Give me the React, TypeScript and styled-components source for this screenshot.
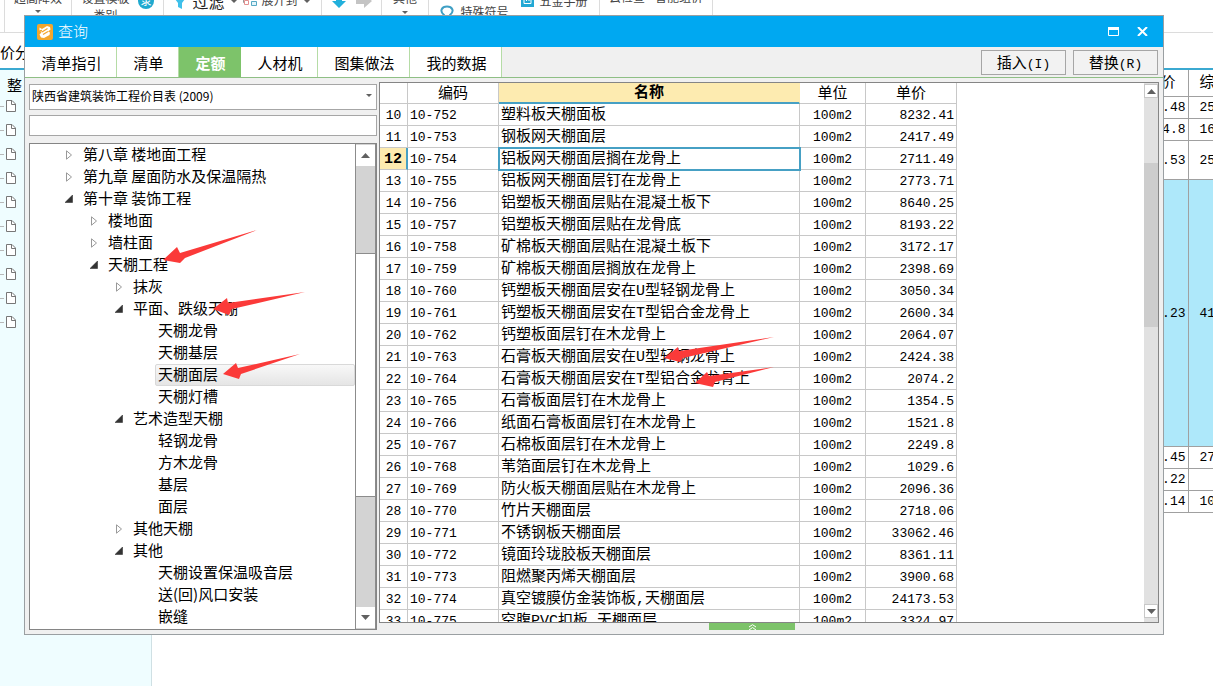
import React from "react";
import styled, { createGlobalStyle, css } from "styled-components";

const sans = `"Noto Sans CJK SC", "Liberation Sans", sans-serif`;
const mono = `"Liberation Mono", "Noto Sans CJK SC", monospace`;
const line = "#c8c8c8";
const accent = "#46a0c4";

const GlobalStyle = createGlobalStyle`
  * { box-sizing: border-box; }
  body { margin: 0; background: #fff; color: #000; font-family: ${sans}; }
  button, input, select { font-family: inherit; color: inherit; }
`;

/* ---------- host application behind the dialog ---------- */

const Page = styled.div`
  position: relative;
  display: flex;
  flex-direction: column;
  height: 100vh;
  min-height: 600px;
  overflow: hidden;
`;

const Ribbon = styled.div`
  display: flex;
  flex: none;
  height: 33px;
  border-bottom: 1px solid #dcdcdc;
  overflow: hidden;
  color: #444;
  font-size: 12px;
  line-height: 12px;
`;

const RibbonGroup = styled.div<{ $w: number; $gap?: number }>`
  flex: none;
  width: ${(p) => p.$w}px;
  border-right: 1px solid #dcdcdc;
  display: flex;
  justify-content: center;
  gap: ${(p) => p.$gap ?? 8}px;
`;

const RibbonStack = styled.div`
  display: flex;
  flex-direction: column;
  align-items: center;
  gap: 2px;
`;

const RibbonRow = styled.div<{ $h?: number; $gap?: number }>`
  flex: none;
  display: flex;
  align-items: flex-end;
  height: ${(p) => p.$h ?? 4}px;
  gap: ${(p) => p.$gap ?? 8}px;
  white-space: nowrap;
  svg { flex: none; }
`;

const FilterLabel = styled.span`
  font-size: 16px;
  line-height: 16px;
  color: #222;
`;

const DocTab = styled.div`
  flex: none;
  height: 37px;
  border-bottom: 2px solid #3ba9d1;
  font-size: 15px;
  line-height: 38px;
  white-space: nowrap;
  overflow: hidden;
`;

const Workspace = styled.div`
  flex: 1;
  display: flex;
  min-height: 0;
`;

const NavPane = styled.div`
  flex: none;
  width: 152px;
  background: #effdff;
  border-right: 1px solid #cfe0e4;
`;

const NavHead = styled.div`
  height: 24px;
  padding-left: 7px;
  font-size: 15px;
  line-height: 30px;
`;

const NavItem = styled.div`
  height: 24px;
  display: flex;
  align-items: center;
`;

const HostArea = styled.div`
  flex: 1;
  overflow: hidden;
`;

const HostTable = styled.table`
  width: 100%;
  table-layout: fixed;
  border-collapse: collapse;
  font-family: ${mono};
  font-size: 13px;
  line-height: 18px;
  th, td {
    padding: 2px 2px 0 0;
    border-bottom: 1px solid #a0a0a0;
    overflow: hidden;
    text-align: right;
    font-weight: 400;
    white-space: nowrap;
  }
  th { font-size: 15px; padding-right: 12px; }
  td + td, th + th { border-left: 1px solid #a0a0a0; text-align: left; padding: 2px 0 0 11px; }
`;

const HostRow = styled.tr<{ $h: number; $on?: boolean }>`
  height: ${(p) => p.$h}px;
  background: ${(p) => (p.$on ? "#aee8fa" : "#fff")};
`;

/* ---------- dialog ---------- */

const Dialog = styled.section`
  position: absolute;
  top: 15px;
  right: 49px;
  bottom: 51px;
  left: 24px;
  display: flex;
  flex-direction: column;
  background: #f0f0f0;
  border: 1px solid #9a9fa2;
`;

const TitleBar = styled.header`
  flex: none;
  height: 31px;
  padding: 0 13px 0 12px;
  display: flex;
  align-items: center;
  gap: 5px;
  background: #00a8f1;
  color: #fff;
  h1 { flex: 1; margin: 0; padding-bottom: 2px; font-size: 15px; font-weight: 300; line-height: 28px; }
`;

const WindowButton = styled.button`
  width: 15px;
  height: 15px;
  margin-left: 9px;
  padding: 0;
  border: 0;
  background: none;
  display: grid;
  place-items: center;
`;

const TabBar = styled.nav`
  flex: none;
  height: 31px;
  padding-right: 5px;
  border-bottom: 1px solid #8fbf85;
  display: flex;
  align-items: center;
`;

const Tab = styled.button<{ $w: number; $on?: boolean }>`
  width: ${(p) => p.$w}px;
  height: 30px;
  padding: 2px 0 0 2px;
  border: 0;
  border-right: 1px solid #b5dca6;
  background: #fff;
  font-size: 15px;
  line-height: 28px;
  ${(p) =>
    p.$on &&
    css`
      background: #7dc36a;
      border-color: #7dc36a;
      color: #fff;
      font-weight: 700;
    `}
`;

const Actions = styled.div`
  margin-left: auto;
  display: flex;
  gap: 7px;
`;

const ActionButton = styled.button`
  width: 85px;
  height: 25px;
  padding: 0;
  border: 1px solid #a6a6a6;
  background: #f2f2f2;
  font-size: 15px;
  line-height: 21px;
  span { font-family: "Liberation Mono", monospace; font-size: 13px; }
`;

const Body = styled.div`
  flex: 1;
  min-height: 0;
  display: flex;
  gap: 2px;
  padding: 4px 4px 0;
`;

const Side = styled.div`
  flex: none;
  width: 348px;
  display: flex;
  flex-direction: column;
  padding-bottom: 4px;
`;

const ComboWrap = styled.div`
  position: relative;
  flex: none;
  height: 26px;
  svg { position: absolute; right: 5px; top: 12px; pointer-events: none; }
`;

const Combo = styled.select`
  width: 100%;
  height: 26px;
  padding: 0 16px 2px 2px;
  border: 1px solid #a6a6a6;
  border-radius: 0;
  background: #fff;
  appearance: none;
  font-size: 12px;
`;

const Search = styled.input`
  flex: none;
  height: 21px;
  margin: 7px 0;
  padding: 0 4px;
  border: 1px solid #a6a6a6;
  background: #fff;
`;

const TreeBox = styled.div`
  flex: 1;
  min-height: 0;
  display: flex;
  border: 1px solid #858585;
  background: #fff;
  overflow: hidden;
`;

const Tree = styled.ul`
  flex: 1;
  margin: 0;
  padding: 0;
  list-style: none;
  font-size: 15px;
`;

const TreeItem = styled.li<{ $level: number }>`
  height: 22px;
  padding-left: ${(p) => 33 + p.$level * 25}px;
  display: flex;
  align-items: center;
  gap: 5px;
`;

const Toggle = styled.button`
  flex: none;
  width: 12px;
  height: 12px;
  padding: 0;
  border: 0;
  background: none;
  display: grid;
  place-items: center;
`;

const TogglePlaceholder = styled.span`
  flex: none;
  width: 12px;
`;

const NodeLabel = styled.span<{ $on?: boolean }>`
  flex: 1;
  height: 22px;
  padding-left: 2px;
  border: 1px solid transparent;
  line-height: 18px;
  white-space: nowrap;
  ${(p) =>
    p.$on &&
    css`
      border-color: #d9d9d9;
      border-radius: 2px;
      background: linear-gradient(#f8f8f8, #e5e5e5);
    `}
`;

const TreeScroll = styled.div`
  flex: none;
  width: 21px;
  padding: 1px 0;
  display: flex;
  flex-direction: column;
  background: #d3d3d3;
  border: solid #8c8c8c;
  border-width: 0 1px;
`;

const TreeScrollButton = styled.button`
  flex: none;
  height: 21px;
  padding: 0;
  border: 0;
  background: #fff;
  display: grid;
  place-items: center;
`;

const TreeThumb = styled.div`
  height: 244px;
  margin: 87px 0 auto;
  border: solid #8c8c8c;
  border-width: 1px 0;
  background: #fff;
`;

const Main = styled.div`
  flex: 1;
  min-width: 0;
  display: flex;
  flex-direction: column;
`;

const GridBox = styled.div`
  flex: 1;
  min-height: 0;
  display: flex;
  justify-content: space-between;
  border: 1px solid #858585;
  background: #fff;
  overflow: hidden;
`;

const Grid = styled.table`
  width: 577px;
  height: 0;
  table-layout: fixed;
  border-collapse: separate;
  border-spacing: 0;
  font-family: ${mono};
  font-size: 13px;
`;

const HeadCell = styled.th<{ $on?: boolean }>`
  height: 21px;
  padding: 3px 0 0;
  border: solid ${line};
  border-width: 0 1px 1px 0;
  font-size: 15px;
  font-weight: 400;
  line-height: 17px;
  ${(p) =>
    p.$on &&
    css`
      background: #fdebb0;
      border-right-color: #fdebb0;
      border-bottom: 2px solid ${accent};
      font-weight: 700;
      line-height: 16px;
    `}
`;

const RowHead = styled.th<{ $on?: boolean }>`
  height: 22px;
  padding: 3px 0 0;
  border: solid ${line};
  border-width: 0 1px 1px 0;
  font-weight: 400;
  line-height: 18px;
  ${(p) =>
    p.$on &&
    css`
      background: #fdebb0;
      border-right: 2px solid ${accent};
      font-size: 15px;
      font-weight: 700;
    `}
`;

const Cell = styled.td<{ $align?: string; $name?: boolean; $on?: boolean }>`
  height: 22px;
  padding: 3px 2px 0;
  border: solid ${line};
  border-width: 0 1px 1px 0;
  text-align: ${(p) => p.$align ?? "left"};
  line-height: 18px;
  white-space: nowrap;
  font-size: ${(p) => (p.$name ? 15 : 13)}px;
  ${(p) =>
    p.$on &&
    css`
      outline: 2px solid ${accent};
      outline-offset: -1px;
    `}
`;

const GridScroll = styled.div`
  flex: none;
  width: 14px;
  padding: 1px 0 4px;
  display: flex;
  flex-direction: column;
  background: #e1e1e1;
`;

const GridScrollButton = styled.button`
  flex: none;
  height: 14px;
  padding: 0;
  border: 1px solid #c8c8c8;
  background: #fff;
  display: grid;
  place-items: center;
`;

const GridThumb = styled.div`
  height: 164px;
  margin: 65px 0 auto;
  background: #cdcdcd;
`;

const Footer = styled.div`
  flex: none;
  height: 11px;
  padding-right: 32px;
  display: flex;
  justify-content: center;
  align-items: flex-start;
`;

const Handle = styled.button`
  width: 86px;
  height: 7px;
  margin-right: 2px;
  padding: 0;
  border: 0;
  background: #7dc36a;
  display: grid;
  place-items: center;
`;

const Annotations = styled.svg`
  position: absolute;
  top: 0;
  left: 0;
  width: 100%;
  height: 100%;
  pointer-events: none;
`;

/* ---------- small drawings ---------- */

const Caret = ({ up, w = 10, h = 5, fill = "#606060" }: { up?: boolean; w?: number; h?: number; fill?: string }) => (
  <svg width={w} height={h} viewBox="0 0 10 5" preserveAspectRatio="none" display="block">
    <path d={up ? "M0 5L5 0L10 5Z" : "M0 0H10L5 5Z"} fill={fill} />
  </svg>
);

const PageIcon = () => (
  <svg width="17" height="14" viewBox="0 0 17 14">
    <path d="M0 7.500H4" stroke="#b9b9b9" />
    <path d="M6.500 1.500H12L15.500 5V12.500H6.500Z" fill="#fff" stroke="#777" />
    <path d="M11.500 1.500V5.500H15.500" fill="none" stroke="#777" />
  </svg>
);

const AppIcon = () => (
  <svg width="16" height="16" viewBox="0 0 16 16">
    <rect width="16" height="16" rx="2" fill="#f3a62d" />
    <path
      d="M2.500 3.500L5 5L10 2L13 3L13.500 5.500L11 7.500L13 8.500L12.500 11L7 14L4 13.500L2.500 10.500L4.500 8.500L2.500 6.500Z"
      fill="#fff"
    />
    <path d="M5 8L10.500 4.500M6 10.500L11 7.500M2.500 7L5 6.500" stroke="#f3a62d" strokeWidth="1.300" />
  </svg>
);

/* ---------- data ---------- */

type Node = [level: number, label: string, state?: "open" | "closed"];

const nodes: Node[] = [
  [0, "第八章 楼地面工程", "closed"],
  [0, "第九章 屋面防水及保温隔热", "closed"],
  [0, "第十章 装饰工程", "open"],
  [1, "楼地面", "closed"],
  [1, "墙柱面", "closed"],
  [1, "天棚工程", "open"],
  [2, "抹灰", "closed"],
  [2, "平面、跌级天棚", "open"],
  [3, "天棚龙骨"],
  [3, "天棚基层"],
  [3, "天棚面层"],
  [3, "天棚灯槽"],
  [2, "艺术造型天棚", "open"],
  [3, "轻钢龙骨"],
  [3, "方木龙骨"],
  [3, "基层"],
  [3, "面层"],
  [2, "其他天棚", "closed"],
  [2, "其他", "open"],
  [3, "天棚设置保温吸音层"],
  [3, "送(回)风口安装"],
  [3, "嵌缝"],
];

const items: [string, string][] = [
  ["塑料板天棚面板", "8232.41"],
  ["钢板网天棚面层", "2417.49"],
  ["铝板网天棚面层搁在龙骨上", "2711.49"],
  ["铝板网天棚面层钉在龙骨上", "2773.71"],
  ["铝塑板天棚面层贴在混凝土板下", "8640.25"],
  ["铝塑板天棚面层贴在龙骨底", "8193.22"],
  ["矿棉板天棚面层贴在混凝土板下", "3172.17"],
  ["矿棉板天棚面层搁放在龙骨上", "2398.69"],
  ["钙塑板天棚面层安在U型轻钢龙骨上", "3050.34"],
  ["钙塑板天棚面层安在T型铝合金龙骨上", "2600.34"],
  ["钙塑板面层钉在木龙骨上", "2064.07"],
  ["石膏板天棚面层安在U型轻钢龙骨上", "2424.38"],
  ["石膏板天棚面层安在T型铝合金龙骨上", "2074.2"],
  ["石膏板面层钉在木龙骨上", "1354.5"],
  ["纸面石膏板面层钉在木龙骨上", "1521.8"],
  ["石棉板面层钉在木龙骨上", "2249.8"],
  ["苇箔面层钉在木龙骨上", "1029.6"],
  ["防火板天棚面层贴在木龙骨上", "2096.36"],
  ["竹片天棚面层", "2718.06"],
  ["不锈钢板天棚面层", "33062.46"],
  ["镜面玲珑胶板天棚面层", "8361.11"],
  ["阻燃聚丙烯天棚面层", "3900.68"],
  ["真空镀膜仿金装饰板,天棚面层", "24173.53"],
  ["空腹PVC扣板,天棚面层", "3324.97"],
];

const hostRows: [number, string, string, boolean?][] = [
  [22, ".48", "25"],
  [22, "4.8", "16"],
  [39, ".53", "25"],
  [267, ".23", "41", true],
  [22, ".45", "27"],
  [22, ".22", ""],
  [22, ".14", "10"],
];

const tabs: [string, number][] = [
  ["清单指引", 92],
  ["清单", 62],
  ["定额", 62],
  ["人材机", 77],
  ["图集做法", 92],
  ["我的数据", 92],
];

const arrows = [
  "163,260 177,247 180,253 257,230 185,258 180,263",
  "213,309 227,298 228,303 305,292 232,309 229,315",
  "223,374 236,363 238,368 300,354 241,374 239,379",
  "664,358 678,347 679,351 774,337 683,358 680,362",
  "695,383 707,372 709,376 774,367 715,382 713,387",
];

export default function App() {
  return (
    <Page>
      <GlobalStyle />
      <Ribbon>
        <RibbonGroup $w={5} />
        <RibbonGroup $w={67}>
          <RibbonStack>
            <RibbonRow>超高降效</RibbonRow>
            <RibbonRow $h={7}><Caret w={6} h={3} /></RibbonRow>
          </RibbonStack>
        </RibbonGroup>
        <RibbonGroup $w={92}>
          <RibbonStack>
            <RibbonRow>设置模板</RibbonRow>
            <RibbonRow $h={15}>类别</RibbonRow>
          </RibbonStack>
          <RibbonRow $h={9}>
            <svg width="16" height="16" viewBox="0 0 16 16">
              <circle cx="8" cy="8" r="8" fill="#1fa9cf" />
              <text x="8" y="12" fontSize="11" textAnchor="middle" fill="#fff">录</text>
            </svg>
          </RibbonRow>
        </RibbonGroup>
        <RibbonGroup $w={158} $gap={6}>
          <RibbonRow $h={9} $gap={7}>
            <svg width="10" height="16" viewBox="0 0 10 16">
              <path d="M0 6H10L7 10V16L3 14V10Z" fill="#3fc0ea" />
            </svg>
            <FilterLabel>过滤</FilterLabel>
          </RibbonRow>
          <RibbonRow $h={3}><Caret w={6} h={3} /></RibbonRow>
          <RibbonRow $h={6} $gap={4}>
            <svg width="15" height="13" viewBox="0 0 15 13">
              <path d="M.5 .5V9.500H6M3 5.500H7" fill="none" stroke="#999" />
              <path d="M1.500 7.500H5.500V11.500H1.500Z" fill="#fff" stroke="#e29090" />
              <path d="M8.500 2.500H13.500V6.500H8.500ZM8.500 8.500H13.500V12.500H8.500Z" fill="#e2f5fb" stroke="#55a8c4" />
            </svg>
            <span>展开到</span>
          </RibbonRow>
          <RibbonRow $h={3}><Caret w={6} h={3} /></RibbonRow>
        </RibbonGroup>
        <RibbonGroup $w={60}>
          <RibbonRow $h={8} $gap={10}>
            <svg width="14" height="14" viewBox="0 0 14 14">
              <path d="M4 0H10V7H14L7 14L0 7H4Z" fill="#22b0dc" />
            </svg>
            <svg width="16" height="14" viewBox="0 0 16 14">
              <path d="M0 4H8V0L16 7L8 14V10H0Z" fill="#c4c4c4" />
            </svg>
          </RibbonRow>
        </RibbonGroup>
        <RibbonGroup $w={47}>
          <RibbonStack>
            <RibbonRow>其他</RibbonRow>
            <RibbonRow $h={8}><Caret w={6} h={3} /></RibbonRow>
          </RibbonStack>
        </RibbonGroup>
        <RibbonGroup $w={171} $gap={12}>
          <RibbonRow $h={18} $gap={6}>
            <svg width="14" height="13" viewBox="0 0 14 13">
              <path d="M1 12H4V10C-1 6 2 1.500 7 1.500S15 6 10 10V12H13" fill="none" stroke="#3f9fc4" strokeWidth="2" />
            </svg>
            特殊符号
          </RibbonRow>
          <RibbonRow $h={7} $gap={6}>
            <svg width="13" height="15" viewBox="0 0 13 15">
              <rect width="13" height="15" fill="#22a8d4" />
              <path d="M3 2.500H10V11.500H3ZM5.500 3V9M8 3V9" fill="none" stroke="#fff" />
            </svg>
            五金手册
          </RibbonRow>
        </RibbonGroup>
        <RibbonGroup $w={113}>
          <RibbonRow $h={3} $gap={10}>
            <span>云检查</span>
            <span>智能组价</span>
          </RibbonRow>
        </RibbonGroup>
      </Ribbon>
      <DocTab>价分</DocTab>
      <Workspace>
        <NavPane>
          <NavHead>整</NavHead>
          {Array.from({ length: 10 }, (_, i) => (
            <NavItem key={i}><PageIcon /></NavItem>
          ))}
        </NavPane>
        <HostArea>
          <HostTable>
            <colgroup><col /><col width="25" /></colgroup>
            <thead>
              <HostRow $h={26}><th>价</th><th>综</th></HostRow>
            </thead>
            <tbody>
              {hostRows.map(([h, a, b, on], i) => (
                <HostRow key={i} $h={h} $on={on}><td>{a}</td><td>{b}</td></HostRow>
              ))}
            </tbody>
          </HostTable>
        </HostArea>
      </Workspace>

      <Dialog aria-label="查询">
        <TitleBar>
          <AppIcon />
          <h1>查询</h1>
          <WindowButton aria-label="最大化">
            <svg width="11" height="9" viewBox="0 0 11 9">
              <path d="M.5 .5H10.500V8.500H.5Z" fill="none" stroke="#fff" />
              <path d="M0 0H11V3H0Z" fill="#fff" />
            </svg>
          </WindowButton>
          <WindowButton aria-label="关闭">
            <svg width="11" height="9" viewBox="0 0 11 9">
              <path d="M1 0L10 9M10 0L1 9" stroke="#fff" strokeWidth="2" />
            </svg>
          </WindowButton>
        </TitleBar>
        <TabBar>
          {tabs.map(([label, w]) => (
            <Tab key={label} $w={w} $on={label === "定额"}>{label}</Tab>
          ))}
          <Actions>
            <ActionButton>插入<span>(I)</span></ActionButton>
            <ActionButton>替换<span>(R)</span></ActionButton>
          </Actions>
        </TabBar>
        <Body>
          <Side>
            <ComboWrap>
              <Combo aria-label="定额库"><option>陕西省建筑装饰工程价目表 (2009)</option></Combo>
              <Caret w={6} h={3} />
            </ComboWrap>
            <Search aria-label="搜索" />
            <TreeBox>
              <Tree>
                {nodes.map(([level, label, state], i) => (
                  <TreeItem key={i} $level={level}>
                    {state ? (
                      <Toggle aria-label={label}>
                        <svg width="8" height="10" viewBox="0 0 8 10">
                          {state === "open" ? (
                            <path d="M7.500 1V8.500H0Z" fill="#333" stroke="#222" strokeWidth=".5" />
                          ) : (
                            <path d="M1.500 .8L6.500 5L1.500 9.200Z" fill="#fff" stroke="#999" />
                          )}
                        </svg>
                      </Toggle>
                    ) : (
                      <TogglePlaceholder />
                    )}
                    <NodeLabel $on={label === "天棚面层"}>{label}</NodeLabel>
                  </TreeItem>
                ))}
              </Tree>
              <TreeScroll>
                <TreeScrollButton aria-label="向上"><Caret up w={9} /></TreeScrollButton>
                <TreeThumb />
                <TreeScrollButton aria-label="向下"><Caret w={9} /></TreeScrollButton>
              </TreeScroll>
            </TreeBox>
          </Side>
          <Main>
            <GridBox>
              <Grid>
                <colgroup>
                  <col width="28" /><col width="91" /><col width="301" /><col width="66" /><col width="91" />
                </colgroup>
                <thead>
                  <tr>
                    <HeadCell />
                    <HeadCell>编码</HeadCell>
                    <HeadCell $on>名称</HeadCell>
                    <HeadCell>单位</HeadCell>
                    <HeadCell>单价</HeadCell>
                  </tr>
                </thead>
                <tbody>
                  {items.map(([name, price], i) => (
                    <tr key={i}>
                      <RowHead $on={i === 2}>{i + 10}</RowHead>
                      <Cell>10-{i + 752}</Cell>
                      <Cell $name $on={i === 2}>{name}</Cell>
                      <Cell $align="center">100m2</Cell>
                      <Cell $align="right">{price}</Cell>
                    </tr>
                  ))}
                </tbody>
              </Grid>
              <GridScroll>
                <GridScrollButton aria-label="向上"><Caret up w={9} /></GridScrollButton>
                <GridThumb />
                <GridScrollButton aria-label="向下"><Caret w={9} /></GridScrollButton>
              </GridScroll>
            </GridBox>
            <Footer>
              <Handle aria-label="展开">
                <svg width="9" height="6" viewBox="0 0 9 6">
                  <path d="M1 3L4.500 .7L8 3M1 6L4.500 3.500L8 6" fill="none" stroke="#fff" />
                </svg>
              </Handle>
            </Footer>
          </Main>
        </Body>
      </Dialog>

      <Annotations aria-hidden="true">
        {arrows.map((points) => (
          <polygon key={points} points={points} fill="#fb3a39" />
        ))}
      </Annotations>
    </Page>
  );
}
